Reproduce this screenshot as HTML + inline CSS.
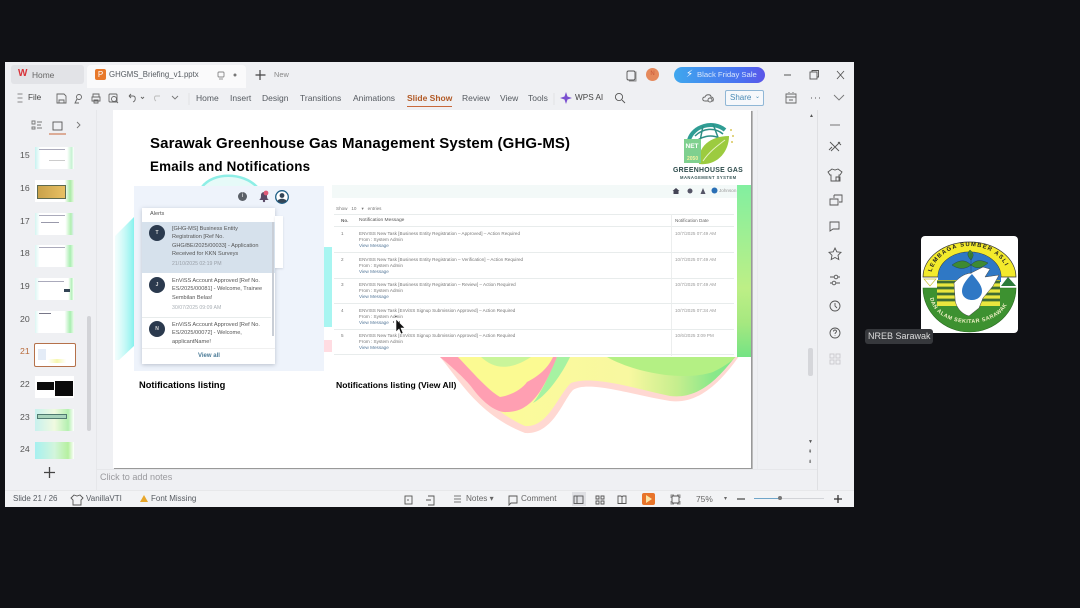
<!DOCTYPE html>
<html><head><meta charset="utf-8">
<style>
html,body{margin:0;padding:0;width:1080px;height:608px;overflow:hidden;background:#101115;font-family:"Liberation Sans",sans-serif}
#root{position:absolute;left:0;top:0;width:1080px;height:608px;overflow:hidden;background:#101115;filter:blur(.35px)}
.a{position:absolute;white-space:nowrap}
#win{position:absolute;left:5px;top:62px;width:849px;height:445px;background:#eff0f3}
.t{font-size:8.5px;color:#555a60;position:absolute;white-space:nowrap;line-height:12px}
.n{position:absolute;left:20px;font-size:8.7px;color:#555;line-height:12px}
.th{position:absolute;left:35px;width:39px;height:22px;background:#fff}
svg{position:absolute;overflow:visible}
.s{font-size:4.6px;color:#777;line-height:6.2px;position:absolute;white-space:nowrap}
.al{font-size:5.6px;color:#555;line-height:8.4px;position:absolute;white-space:nowrap}
.av{position:absolute;width:16px;height:16px;border-radius:8px;background:#2b3a4e;color:#ddd;font-size:5px;font-weight:bold;text-align:center;line-height:16px}
.b{font-weight:bold;color:#000;position:absolute;white-space:nowrap}
.ln{position:absolute;height:1px;background:#e8ecec}
</style></head><body><div id="root">
<div id="win"></div>

<!-- tab bar -->
<div class="a" style="left:11px;top:65px;width:73px;height:19px;background:#e2e3e7;border-radius:3px"></div>
<div class="a" style="left:18px;top:69px;color:#d9333a;font-size:10px;font-weight:bold;line-height:10px">W</div>
<div class="t" style="left:32px;top:69px;color:#666;font-size:8.4px">Home</div>
<div class="a" style="left:87px;top:65px;width:159px;height:23px;background:#fafafb;border-radius:4px 4px 0 0"></div>
<div class="a" style="left:95px;top:69px;width:11px;height:11px;background:#e8792b;border-radius:2px;color:#fff;font-size:8px;line-height:11px;text-align:center">P</div>
<div class="t" style="left:109px;top:69px;font-size:7.8px">GHGMS_Briefing_v1.pptx</div>
<div class="a" style="left:646px;top:68px;width:13px;height:13px;border-radius:7px;background:#e5895c;color:#c9573a;font-size:6px;text-align:center;line-height:13px">N</div>
<div class="a" style="left:674px;top:67px;width:91px;height:16px;border-radius:8px;background:linear-gradient(90deg,#3fa7ee,#4a6ff0 75%,#5b55e8);color:#d8e6fb;font-size:7.7px;line-height:16px;text-indent:23px">Black Friday Sale</div>
<div class="a" style="left:686px;top:69px;color:#fff;font-size:10px;line-height:12px">⚡︎</div>
<div class="t" style="left:274px;top:69px;font-size:7.4px;color:#888">New</div>

<!-- menu -->
<div class="t" style="left:28px;top:92px;font-size:8.2px;color:#444">File</div>
<div class="t" style="left:196px;top:92px">Home</div>
<div class="t" style="left:230px;top:92px">Insert</div>
<div class="t" style="left:262px;top:92px">Design</div>
<div class="t" style="left:300px;top:92px">Transitions</div>
<div class="t" style="left:353px;top:92px">Animations</div>
<div class="t" style="left:407px;top:92px;color:#b25a26;font-weight:bold;font-size:8.5px">Slide Show</div>
<div class="a" style="left:407px;top:106px;width:45px;height:1px;background:#c8693b"></div>
<div class="t" style="left:462px;top:92px">Review</div>
<div class="t" style="left:500px;top:92px">View</div>
<div class="t" style="left:528px;top:92px">Tools</div>
<div class="t" style="left:575px;top:92px;color:#444;font-size:8.2px">WPS AI</div>
<div class="a" style="left:725px;top:90px;width:37px;height:14px;border:1px solid #90b7d6;border-radius:2px;background:#f6f8fb;color:#4a8ab5;font-size:8px;line-height:14px;text-indent:4px">Share</div>
<div class="a" style="left:755px;top:93px;color:#4a8ab5;font-size:6px">⌄</div>

<!-- panel dividers -->
<div class="a" style="left:96px;top:110px;width:1px;height:380px;background:#e6e7ea"></div>
<div class="a" style="left:97px;top:469px;width:720px;height:1px;background:#e6e7ea"></div>
<div class="a" style="left:757px;top:110px;width:1px;height:359px;background:#e9eaed"></div>
<div class="a" style="left:817px;top:110px;width:1px;height:380px;background:#dfe0e3"></div>
<div class="a" style="left:808px;top:348px;width:5px;height:28px;background:#d5d6da;border-radius:2px"></div>
<div class="a" style="left:87px;top:316px;width:4px;height:115px;background:#d2d3d7;border-radius:2px"></div>
<div class="a" style="left:809px;top:113px;font-size:5px;color:#555">▲</div>
<div class="a" style="left:808px;top:437px;font-size:5px;color:#555;line-height:10px">▼<br>⇞<br>⇟</div>

<!-- thumbs -->
<div class="n" style="top:149px">15</div><div class="n" style="top:182px">16</div><div class="n" style="top:215px">17</div><div class="n" style="top:247px">18</div><div class="n" style="top:280px">19</div><div class="n" style="top:313px">20</div><div class="n" style="top:345px;color:#b86a3a">21</div><div class="n" style="top:378px">22</div><div class="n" style="top:411px">23</div><div class="n" style="top:443px">24</div>
<div class="th" style="top:147px;background:linear-gradient(90deg,#c6f3f0 0,#fff 14%,#fff 82%,#c6f2d2 94%,#fff)"><div class="a" style="left:4px;top:2px;width:26px;height:1px;background:#aab"></div><div class="a" style="left:14px;top:13px;width:16px;height:1px;background:#ccc"></div></div>
<div class="th" style="top:180px;background:linear-gradient(90deg,#fff 76%,#a9eaa6 90%,#eaf9e4)"><div class="a" style="left:2px;top:5px;width:27px;height:12px;background:linear-gradient(90deg,#c9a24a,#e8c063);border:1px solid #5d6a50"></div></div>
<div class="th" style="top:213px;background:linear-gradient(90deg,#d4f5f1 0,#fff 12%,#fff 78%,#b0efb0 92%,#eef)"><div class="a" style="left:4px;top:2px;width:26px;height:1px;background:#aab"></div><div class="a" style="left:6px;top:9px;width:18px;height:1px;background:#99a"></div></div>
<div class="th" style="top:245px;background:linear-gradient(90deg,#dcf6f3 0,#fff 12%,#fff 76%,#a8eeb0 90%,#eefbee)"><div class="a" style="left:4px;top:2px;width:26px;height:1px;background:#aab"></div></div>
<div class="th" style="top:278px;background:linear-gradient(90deg,#dcf6f3 0,#fff 12%,#fff 85%,#b4f0ba 94%,#fff)"><div class="a" style="left:29px;top:11px;width:6px;height:3px;background:#345"></div><div class="a" style="left:3px;top:3px;width:26px;height:1px;background:#aab"></div></div>
<div class="th" style="top:311px;background:linear-gradient(90deg,#dcf6f3 0,#fff 10%,#fff 76%,#a8eeb0 90%,#eefbee)"><div class="a" style="left:4px;top:2px;width:12px;height:1px;background:#778"></div></div>
<div class="th" style="top:343px;left:34px;width:40px;height:22px;border:1px solid #b5714a;border-radius:2px"><div class="a" style="left:3px;top:5px;width:8px;height:11px;background:#e4ecf7"></div><div class="a" style="left:13px;top:15px;width:18px;height:4px;background:linear-gradient(90deg,#fff,#f6f8b0,#fff)"></div></div>
<div class="th" style="top:376px"><div class="a" style="left:2px;top:6px;width:17px;height:8px;background:#0a0a0a"></div><div class="a" style="left:20px;top:5px;width:18px;height:15px;background:#0a0a0a"></div></div>
<div class="th" style="top:409px;background:linear-gradient(90deg,#c8f1ee,#f0fae0 50%,#b4f0b0 85%,#fff)"><div class="a" style="left:2px;top:5px;width:28px;height:3px;background:#a8d4bc;border:1px solid #507a70"></div></div>
<div class="th" style="top:442px;height:17px;background:linear-gradient(90deg,#a6f0f0,#d2f5dc 50%,#b6f0a0 85%,#fff)"></div>

<div class="a" style="left:100px;top:472px;font-size:9.1px;color:#9a9a9e">Click to add notes</div>

<!-- status -->
<div class="a" style="left:5px;top:490px;width:849px;height:17px;background:#f2f3f5;border-top:1px solid #e7e8ea;box-sizing:border-box"></div>
<div class="t" style="left:13px;top:493px;font-size:8px">Slide 21 / 26</div>
<div class="t" style="left:86px;top:493px;font-size:8px">VanillaVTI</div>
<div class="t" style="left:151px;top:493px;font-size:8px">Font Missing</div>
<div class="t" style="left:466px;top:493px;font-size:8.2px;color:#666">Notes ▾</div>
<div class="t" style="left:521px;top:493px;font-size:8.2px;color:#666">Comment</div>
<div class="a" style="left:572px;top:492px;width:14px;height:14px;background:#dfe0e4"></div>
<div class="a" style="left:642px;top:493px;width:13px;height:12px;background:#e8742a;border-radius:2px"></div>
<div class="a" style="left:646px;top:495px;width:0;height:0;border-left:6px solid #fbe4a5;border-top:4px solid transparent;border-bottom:4px solid transparent"></div>
<div class="t" style="left:696px;top:493px;font-size:8.4px;color:#666">75%</div>
<div class="a" style="left:724px;top:495px;font-size:6px;color:#666">▾</div>
<div class="a" style="left:754px;top:498px;width:70px;height:1px;background:#d2d4d8"></div>
<div class="a" style="left:754px;top:498px;width:25px;height:1px;background:#6fa5c9"></div>
<div class="a" style="left:778px;top:496px;width:4px;height:4px;border-radius:2px;background:#777"></div>

<!-- chrome icons -->
<svg style="left:0;top:0" width="1080" height="608" fill="none" stroke="#555" stroke-width=".9">
<rect x="218" y="72" width="6" height="5" rx="1" stroke="#888"/><path d="M219 79h4" stroke="#888"/>
<circle cx="235" cy="75" r="1.5" fill="#777" stroke="none"/>
<path d="M260 70v10M255.500 75h10" stroke="#444" stroke-width="1.200"/>
<rect x="627" y="71" width="8" height="9" rx="1.500" stroke="#555"/><path d="M635 72h1v9h-7" stroke="#888"/>
<path d="M784 75h7" stroke="#444"/>
<rect x="810" y="72" width="7" height="7" stroke="#555"/><path d="M812 72v-1.500h6.500v6.500h-1.500" stroke="#555"/>
<path d="M837 71l7 8M844 71l-7 8" stroke="#555"/>
<path d="M17.500 94h5M17.500 98h5M17.500 102h5" stroke="#888"/>
<path d="M57 94h7l2 2v7h-9zM59 100h5v3h-5z" stroke="#666"/>
<circle cx="79" cy="97" r="2.500" stroke="#666"/><path d="M77 99l-2 4h4" stroke="#666"/>
<path d="M93 97v-3h6v3M92 97h8v4h-8zM94 100h4v3h-4z" stroke="#666"/>
<rect x="109" y="94" width="8" height="8" rx="1" stroke="#666"/><circle cx="114" cy="99" r="2.500" stroke="#666"/><path d="M116 101l2 2" stroke="#666"/>
<path d="M129 96h4c3 0 3 5 0 6M129 96l2-2M129 96l2 2" stroke="#666"/>
<path d="M141 97l1.500 1.500 1.500-1.500" stroke="#666"/>
<path d="M160 96h-4c-2 0-2 4 0 5" stroke="#bbb"/>
<path d="M172 96l3 3 3-3" stroke="#777"/>
<path d="M189 93v12" stroke="#e0e0e2"/><path d="M554 93v12" stroke="#e0e0e2"/>
<path d="M566 92l1.500 4.500 4.500 1.500-4.500 1.500-1.500 4.500-1.500-4.500-4.500-1.500 4.500-1.500z" fill="#7a4fd0" stroke="none"/>
<circle cx="619" cy="97" r="3.600" stroke="#555"/><path d="M622 100l3 3" stroke="#555"/>
<path d="M705 101c-3 0-3-4 0-4 1-3 6-3 6 0 2 0 3 2 2 4z" stroke="#666"/><circle cx="710" cy="100" r="2" stroke="#666" fill="#eff0f3"/>
<path d="M786 94h10v9h-10zM786 97h10M789 93v-1M793 93v-1M789 100h4" stroke="#666"/>
<path d="M811 98h1M815 98h1M819 98h1" stroke="#555"/>
<path d="M834 95l5 5 5-5" stroke="#777"/>
<path d="M32 121h3v3h-3zM32 127h3v2h-3zM37 122h5M37 125h4M37 128h5" stroke="#777"/>
<rect x="53" y="122" width="9" height="8" stroke="#555"/><path d="M49 134h17" stroke="#c8693b"/>
<path d="M77 122l3 3-3 3" stroke="#777"/>
<path d="M49.500 467v11M44 472.500h11" stroke="#444" stroke-width="1.300"/>
<path d="M830 125h10" stroke="#666"/>
<path d="M830 142l9 9M840 142l-9 9M829 150l3-3M838 142l3 3" stroke="#555"/>
<path d="M832 169l3 1 3-1 4 3-2 3h-1v6h-8v-6h-1l-2-3zM836 177h4v4h-4z" stroke="#555"/>
<path d="M834 195h8v7h-3M830 199h8v6h-8zM834 195v3" stroke="#555"/>
<path d="M830 222h9v7h-6l-3 2z" stroke="#555"/>
<path d="M835 248l1.800 3.800 4.200.5-3 3 .8 4.200-3.800-2-3.800 2 .8-4.200-3-3 4.200-.5z" stroke="#555"/>
<path d="M830 277h4M838 277h2M830 283h2M836 283h4" stroke="#555"/><circle cx="836" cy="277" r="1.800" stroke="#555"/><circle cx="834" cy="283" r="1.800" stroke="#555"/>
<circle cx="835" cy="306" r="5" stroke="#555"/><path d="M835 303v3l2 2" stroke="#555"/>
<circle cx="835" cy="333" r="5" stroke="#555"/><path d="M833.500 331.500c0-2 3-2 3 0 0 1-1.500 1-1.500 2.500M835 335.500v.5" stroke="#555"/>
<g stroke="#c8c8cc"><rect x="830" y="354" width="4" height="4"/><rect x="836" y="354" width="4" height="4"/><rect x="830" y="360" width="4" height="4"/><rect x="836" y="360" width="4" height="4"/></g>
<path d="M74 495l3 1 3-1 3 3-2 2v5h-8v-5l-2-2z" stroke="#555"/>
<path d="M144 495l4 7h-8z" fill="#e8a72b" stroke="none"/>
<rect x="405" y="496" width="7" height="8" stroke="#555"/><path d="M408 499v2" stroke="#555"/>
<path d="M428 496h6v9h-6M426 500h5" stroke="#555"/>
<path d="M454 496h7M454 499h7M454 502h7" stroke="#777"/>
<path d="M509 496h8v7h-6l-2 2z" stroke="#555"/>
<rect x="574" y="496" width="9" height="7.500" stroke="#555"/><path d="M577 496v7.500" stroke="#555"/>
<path d="M596 496h3v3h-3zM601 496h3v3h-3zM596 501h3v3h-3zM601 501h3v3h-3z" stroke="#555"/>
<path d="M618 496h3l1 1 1-1h3v7.500h-8zM622 497v6.500" stroke="#555"/>
<rect x="672" y="496" width="7" height="7" rx="1" stroke="#555"/><path d="M671 498v-3h3M677 495h3v3M680 501v3h-3M674 504h-3v-3" stroke="#888"/>
<path d="M737 499h8" stroke="#444" stroke-width="1.200"/>
<path d="M834 499h8M838 495v8" stroke="#333" stroke-width="1.300"/>
</svg>

<!-- slide -->
<div class="a" style="left:113px;top:110px;width:638px;height:358px;background:#fff;box-shadow:1px 1px 0 #999,2px 1px 0 #bbb"></div>
<svg style="left:113px;top:110px" width="638" height="358" viewBox="0 0 638 358">
<defs>
<linearGradient id="g1" x1="0" x2="1"><stop offset="0" stop-color="#fdfb98"/><stop offset=".6" stop-color="#f8f8a0"/><stop offset=".76" stop-color="#c6ee8e"/><stop offset=".88" stop-color="#8ae88a"/><stop offset="1" stop-color="#78e888"/></linearGradient>
<linearGradient id="cy" x1="0" x2="1"><stop offset="0" stop-color="#bff8f5" stop-opacity=".2"/><stop offset="1" stop-color="#86f2ee"/></linearGradient>
<linearGradient id="st" x1="0" x2="0" y1="0" y2="1"><stop offset="0" stop-color="#82efa0"/><stop offset=".6" stop-color="#bdef86"/><stop offset=".8" stop-color="#a6e880"/><stop offset="1" stop-color="#74e384"/></linearGradient>
</defs>
<path d="M2 126L21 107V236L6 250H2Z" fill="url(#cy)"/>
<path d="M89 77C100 62 130 62 144 77Z" fill="#e6faf8"/>
<path d="M89 77C100 62 130 62 144 77" fill="none" stroke="#8eeee6" stroke-width="2.500"/>
<rect x="211" y="137" width="8" height="80" fill="#a8f5f1"/>
<rect x="211" y="230" width="8" height="12" fill="#ffdce2"/>
<path d="M327 247C345 268 365 305 412 323 440 325 450 290 460 280 475 270 520 285 557 291 590 295 615 265 638 228V240H327Z" fill="#ffd8d2"/>
<path d="M335 247C355 268 375 300 412 316 435 318 445 285 458 273 480 265 520 278 557 286 590 290 612 262 636 228V240H335Z" fill="url(#g1)"/>
<path d="M327 247C345 262 355 272 360 279 372 295 385 303 394 302 410 302 420 292 428 280 435 268 440 258 444 247Z" fill="#ff9fb2"/>
<path d="M345 247C362 265 375 280 387 287 400 285 410 278 414 272 428 265 436 256 440 247Z" fill="#fbfa92"/>
<path d="M368 247C380 258 395 262 418 247Z" fill="#c9f59a"/>
<path d="M444 247H457C450 262 435 285 420 293 428 283 438 262 444 247Z" fill="#a6f2a2"/>
<path d="M494 247C520 262 570 272 600 262 612 256 622 250 628 240H494Z" fill="#b4f084"/>
<rect x="624" y="75" width="14" height="172" fill="url(#st)"/>
</svg>

<div class="b" style="left:150px;top:136px;font-size:15px;line-height:16px;letter-spacing:.12px">Sarawak Greenhouse Gas Management System (GHG-MS)</div>
<div class="b" style="left:150px;top:159px;font-size:13.4px;line-height:15px;letter-spacing:.2px">Emails and Notifications</div>

<!-- logo -->
<svg style="left:681px;top:122px" width="56" height="42" viewBox="0 0 56 42">
<path d="M8 18C12 4 32 -2 44 8" fill="none" stroke="#2f9d94" stroke-width="4"/>
<path d="M14 14C22 6 34 5 42 12M22 4L18 24M32 2L38 18M12 22C20 14 30 12 38 16" fill="none" stroke="#2d8f86" stroke-width="1.500"/>
<path d="M18 42C16 24 30 14 48 14 48 30 36 44 18 42Z" fill="#9ccb3f"/>
<path d="M22 39C28 30 36 24 44 18" stroke="#e6f2c4" fill="none"/>
<rect x="3" y="17" width="17" height="24" fill="#7fd08f"/>
<text x="4.500" y="26" font-size="6.500" fill="#fff" font-weight="bold" font-family="Liberation Sans">NET</text>
<text x="6" y="38" font-size="5" fill="#f4f4a0" font-weight="bold" font-family="Liberation Sans">2050</text>
<circle cx="50" cy="8" r="1" fill="#d8c65a"/><circle cx="52" cy="14" r="1" fill="#d8c65a"/><circle cx="51" cy="20" r="1" fill="#d8c65a"/>
</svg>
<div class="b" style="left:673px;top:166px;font-size:6.9px;line-height:9px;color:#2c4a4a;letter-spacing:.3px">GREENHOUSE GAS</div>
<div class="a" style="left:680px;top:175px;font-size:4.2px;line-height:6px;color:#3c5a5a;letter-spacing:.45px;font-weight:bold">MANAGEMENT SYSTEM</div>

<!-- left panel -->
<div class="a" style="left:134px;top:186px;width:190px;height:185px;background:#eef3fb"></div>
<div class="a" style="left:142px;top:208px;width:133px;height:156px;background:#fff;box-shadow:0 1px 4px rgba(90,100,120,.35)"></div>
<div class="a" style="left:275px;top:216px;width:8px;height:52px;background:#fff;box-shadow:0 1px 2px rgba(90,100,120,.2)"></div>
<div class="a" style="left:142px;top:222px;width:133px;height:51px;background:#d6e1ec"></div>
<div class="a" style="left:272px;top:222px;width:2px;height:114px;background:#c9ced6"></div>
<div class="a" style="left:238px;top:192px;width:9px;height:9px;border-radius:5px;background:#5b6068;color:#fff;font-size:6px;text-align:center;line-height:9px">i</div>
<svg style="left:258px;top:190px" width="12" height="13"><path d="M1 10c2-1 2-3 2-5s2-3 3-3 3 1 3 3 0 4 2 5z" fill="#5a4a66"/><circle cx="8" cy="3" r="2.400" fill="#e05a78"/><circle cx="6" cy="11" r="1.200" fill="#5a4a66"/></svg>
<svg style="left:275px;top:190px" width="14" height="14"><circle cx="7" cy="7" r="6.300" fill="#fff" stroke="#1f5f86" stroke-width="1.300"/><circle cx="7" cy="5.500" r="2.400" fill="#345"/><path d="M2.500 11c1-3 8-3 9 0-2 2.500-7 2.500-9 0z" fill="#345"/></svg>
<div class="al" style="left:150px;top:210px;font-size:5.600px">Alerts</div>
<div class="av" style="left:149px;top:225px">T</div>
<div class="al" style="left:172px;top:225px">[GHG-MS] Business Entity<br>Registration [Ref No.<br>GHG/BE/2025/00033] - Application<br>Received for KKN Surveys</div>
<div class="al" style="left:172px;top:260px;color:#9aa0a8;font-size:5.200px">21/10/2025 02:19 PM</div>
<div class="av" style="left:149px;top:277px">J</div>
<div class="al" style="left:172px;top:277px">EnViSS Account Approved [Ref No.<br>ES/2025/00081] - Welcome, Trainee<br>Sembilan Belas!</div>
<div class="al" style="left:172px;top:304px;color:#aab0b6;font-size:5.200px">30/07/2025 09:09 AM</div>
<div class="ln" style="left:142px;top:317px;width:129px"></div>
<div class="av" style="left:149px;top:321px">N</div>
<div class="al" style="left:172px;top:321px">EnViSS Account Approved [Ref No.<br>ES/2025/00072] - Welcome,<br>applicantName!</div>
<div class="ln" style="left:142px;top:348px;width:133px;background:#f0f0f0"></div>
<div class="a" style="left:198px;top:352px;font-size:6px;color:#4a7a96;font-weight:bold;line-height:9px">View all</div>
<div class="b" style="left:139px;top:380px;font-size:9.3px;line-height:10px">Notifications listing</div>
<div class="b" style="left:336px;top:380px;font-size:8.6px;line-height:10px">Notifications listing (View All)</div>

<!-- right panel -->
<div class="a" style="left:332px;top:185px;width:405px;height:172px;background:#fff"></div>
<div class="a" style="left:332px;top:185px;width:405px;height:13px;background:#f3f9f8"></div>
<svg style="left:670px;top:186px" width="68" height="10"><path d="M4 2L7.500 5H6.500V8H1.500V5H.5z" transform="translate(2,0)" fill="#445"/><circle cx="20" cy="5" r="2.500" fill="#556"/><path d="M33 2l2.500 6h-5z" fill="#556"/><circle cx="44.500" cy="4.500" r="3" fill="#2a6fb5"/></svg>
<div class="s" style="left:719px;top:188px;color:#999">Johnson</div>
<div class="s" style="left:336px;top:206px">Show &nbsp; 10 &nbsp;&nbsp; ▾ &nbsp; entries</div>
<div class="ln" style="left:334px;top:214px;width:400px"></div>
<div class="s" style="left:341px;top:218px;font-weight:bold;color:#666">No.</div>
<div class="s" style="left:359px;top:218px;color:#555;font-size:4.900px">Notification Message</div>
<div class="s" style="left:675px;top:218px;color:#666">Notification Date</div>
<div class="ln" style="left:334px;top:226px;width:400px"></div>
<div class="a" style="left:671px;top:214px;width:1px;height:142px;background:#eceeee"></div>

<div class="s" style="left:341px;top:231px">1</div>
<div class="s" style="left:359px;top:231px">ENVISS New Task [Business Entity Registration – Approved] – Action Required<br>From : System Admin<br><span style="color:#56799a">View Message</span></div>
<div class="s" style="left:675px;top:231px;color:#999">10/7/2025 07:49 AM</div>
<div class="ln" style="left:334px;top:252px;width:400px"></div>
<div class="s" style="left:341px;top:257px">2</div>
<div class="s" style="left:359px;top:257px">ENVISS New Task [Business Entity Registration – Verification] – Action Required<br>From : System Admin<br><span style="color:#56799a">View Message</span></div>
<div class="s" style="left:675px;top:257px;color:#999">10/7/2025 07:49 AM</div>
<div class="ln" style="left:334px;top:278px;width:400px"></div>
<div class="s" style="left:341px;top:282px">3</div>
<div class="s" style="left:359px;top:282px">ENVISS New Task [Business Entity Registration – Review] – Action Required<br>From : System Admin<br><span style="color:#56799a">View Message</span></div>
<div class="s" style="left:675px;top:282px;color:#999">10/7/2025 07:49 AM</div>
<div class="ln" style="left:334px;top:303px;width:400px"></div>
<div class="s" style="left:341px;top:308px">4</div>
<div class="s" style="left:359px;top:308px">ENVISS New Task [EnViSS Signup Submission Approved] – Action Required<br>From : System Admin<br><span style="color:#56799a">View Message</span></div>
<div class="s" style="left:675px;top:308px;color:#999">10/7/2025 07:34 AM</div>
<div class="ln" style="left:334px;top:329px;width:400px"></div>
<div class="s" style="left:341px;top:333px">5</div>
<div class="s" style="left:359px;top:333px">ENVISS New Task [EnViSS Signup Submission Approved] – Action Required<br>From : System Admin<br><span style="color:#56799a">View Message</span></div>
<div class="s" style="left:675px;top:333px;color:#999">10/6/2025 3:09 PM</div>
<div class="ln" style="left:334px;top:354px;width:400px"></div>

<!-- cursor -->
<svg style="left:392px;top:316px" width="16" height="20"><path d="M4 3l0 13 3-3 2 5 2-1-2-5 4 0z" fill="#111" stroke="#fff" stroke-width=".6"/><path d="M1 6h1M7 6h1M4 0v1" stroke="#111"/></svg>

<!-- participant tile -->
<div class="a" style="left:921px;top:236px;width:97px;height:97px;background:#fff;border-radius:4px"></div>
<svg style="left:921px;top:236px" width="97" height="97" viewBox="0 0 97 97">
<defs><path id="top" d="M10 42A38.500 32 0 0 1 87 42"/><path id="bot" d="M9 60A39.500 27 0 0 0 88 60"/></defs>
<path d="M2 41A46.500 35 0 0 1 95 41H80A31.500 25 0 0 0 17 41Z" fill="#f3ea2c" stroke="#333" stroke-width=".7"/>
<path d="M17 46V41A31.500 25 0 0 1 80 41V46Z" fill="#2f78c5"/>
<path d="M2 52H95C95 76 74 96 48.500 96S2 76 2 52Z" fill="#3d9130" stroke="#2b6a22" stroke-width=".6"/>
<rect x="16" y="44" width="63" height="26" fill="#e9e63e"/>
<path d="M16 46h63M16 52h63M16 58h63M16 64h63" stroke="#3f6d35" stroke-width="2.800"/>
<path d="M3 43h12l-6 7z" fill="#fff" stroke="#c8c030" stroke-width=".7"/><path d="M80 50l7-9 8 9z" fill="#2c7a3a"/>
<path d="M33 47C38 42 42 38 50 37L62 31 69 33 64 41 78 39 72 50 62 62 58 72 48 80C40 78 34 70 34 62Z" fill="#fff" stroke="#444" stroke-width=".5"/>
<path d="M51 38C46 43 41 49 41 55 41 61 46 64 51 64 57 64 61 60 61 55 61 49 55 43 51 38Z" fill="#2f78c5"/>
<path d="M50 38V17M50 29C44 23 38 24 31 29 38 34 45 33 50 29ZM50 29C55 23 61 24 67 27 60 33 55 33 50 29ZM50 24C46 20 46 17 49 14 53 17 53 20 50 24Z" fill="#3d8a33" stroke="#234" stroke-width=".4"/>
<text font-size="5.800" font-weight="bold" fill="#222" font-family="Liberation Sans" letter-spacing="1.200"><textPath href="#top" startOffset="6">LEMBAGA SUMBER ASLI</textPath></text>
<text font-size="5.400" font-weight="bold" fill="#f2f2c8" font-family="Liberation Sans" letter-spacing=".5"><textPath href="#bot" startOffset="2">DAN ALAM SEKITAR SARAWAK</textPath></text>
</svg>
<div class="a" style="left:865px;top:329px;width:68px;height:15px;background:#36383c;border-radius:3px;color:#dcdcdc;font-size:9px;line-height:15px;text-indent:3px">NREB Sarawak</div>
</div></body></html>
